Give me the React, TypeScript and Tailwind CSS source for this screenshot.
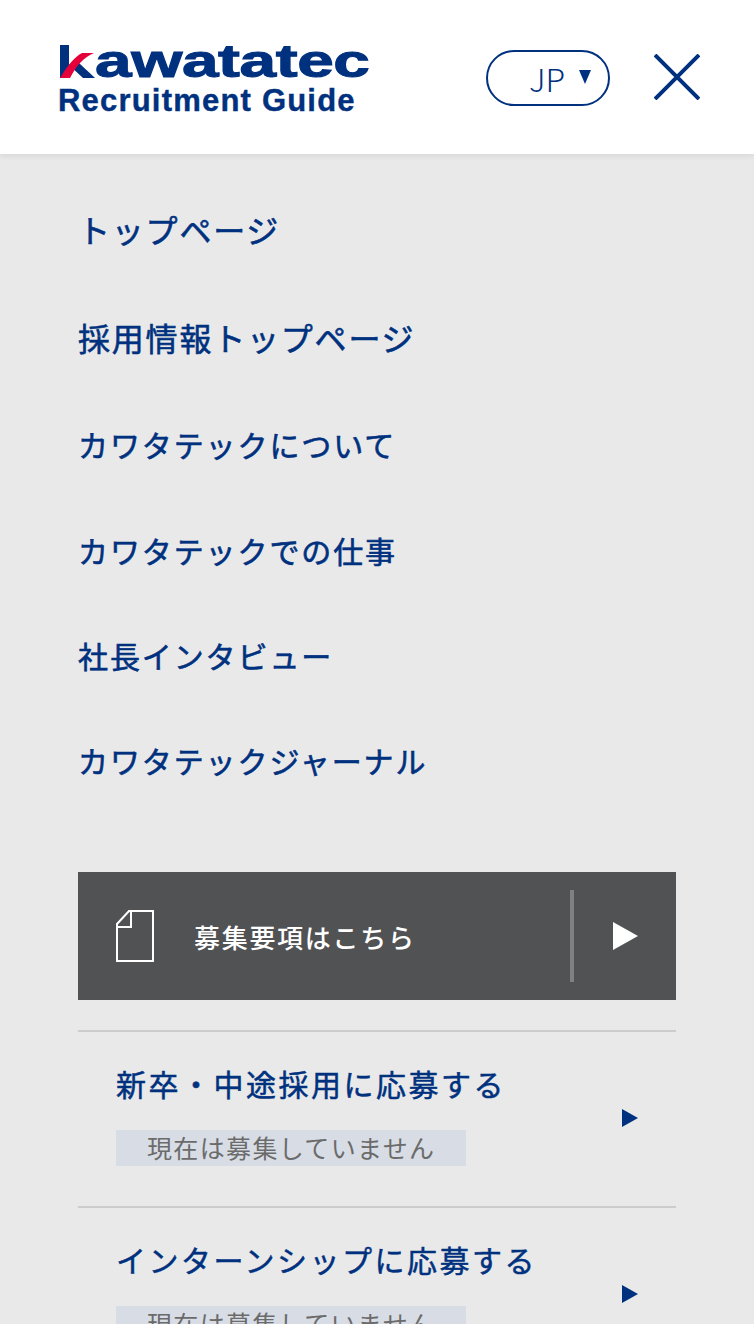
import React from 'react';

const NAVY = 'text-[#00317f]';
const jp = "font-['Noto_Sans_CJK_JP','Noto_Sans',sans-serif]";

const navItems = [
  { label: 'トップページ', height: 'h-[108px]', size: 'text-[32px] tracking-[1.8px]' },
  { label: '採用情報トップページ', height: 'h-[107px]', size: 'text-[32px] tracking-[1.8px]' },
  { label: 'カワタテックについて', height: 'h-[106px]', size: 'text-[30px] tracking-[1.9px]' },
  { label: 'カワタテックでの仕事', height: 'h-[105px]', size: 'text-[30px] tracking-[1.9px]' },
  { label: '社長インタビュー', height: 'h-[105px]', size: 'text-[30px] tracking-[1.9px]' },
  { label: 'カワタテックジャーナル', height: 'h-[105px]', size: 'text-[30px] tracking-[1.9px]' },
];

function Logo() {
  return (
    <div className="flex w-[312px] flex-col">
      <div className="flex h-[36px] items-end">
        <svg width="37" height="34" viewBox="0 0 37 34" className="shrink-0">
          <path d="M1 0H10V33H1Z" fill="#00317f" />
          <path d="M10 20L24 33H36L20 18L14 17Z" fill="#00317f" />
          <path d="M1 33C7 23 15 12 23 8H35C25 12 17 21 11 33Z" fill="#e60039" />
        </svg>
        <span className="-ml-[1px] origin-bottom-left scale-x-[1.43] font-['Liberation_Sans',sans-serif] text-[46px] leading-[35px] font-bold tracking-[-0.3px] whitespace-nowrap text-[#00317f] [-webkit-text-stroke:1px_#00317f]">
          awatatec
        </span>
      </div>
      <span className="mt-[5px] -ml-[1px] font-['Liberation_Sans',sans-serif] text-[31px] leading-[34px] font-bold tracking-[1.2px] whitespace-nowrap text-[#00317f] [-webkit-text-stroke:0.4px_#00317f]">
        Recruitment Guide
      </span>
    </div>
  );
}

function ApplyRow({ title }: { title: string }) {
  return (
    <div className="relative h-[176px] border-t-2 border-[#cccccc] pt-[30px] pl-[38px]">
      <div className={`text-[30px] leading-[42px] tracking-[2.5px] whitespace-nowrap [-webkit-text-stroke:0.5px_#00317f] ${NAVY}`}>{title}</div>
      <div className="mt-[26px] flex h-[36px] w-[350px] items-center bg-[#d8dde5] pl-[31px] text-[25px] tracking-[1.35px] whitespace-nowrap text-[#6b6b6b]">
        現在は募集していません
      </div>
      <svg width="16" height="18" viewBox="0 0 16 18" className="absolute top-[77px] right-[38px]">
        <path d="M0 0L16 9L0 18Z" fill="#00317f" />
      </svg>
    </div>
  );
}

export default function App() {
  return (
    <div className={`h-[1324px] w-[754px] overflow-hidden bg-[#e9e9e9] ${jp}`}>
      <header className="flex h-[154px] items-start justify-between bg-white pt-[43px] pr-[54px] pl-[59px] shadow-[0_2px_6px_rgba(0,0,0,0.08)]">
        <Logo />
        <div className="flex items-center">
          <div className="mt-[7px] flex h-[56px] w-[124px] items-center rounded-full border-2 border-[#00317f] pl-[41px]">
            <span className={`text-[32px] leading-none font-light ${NAVY}`}>JP</span>
            <svg width="12" height="14" viewBox="0 0 12 14" className="ml-[14px] -translate-y-[1px]">
              <path d="M0 0H12L6 14Z" fill="#00317f" />
            </svg>
          </div>
          <svg width="46" height="46" viewBox="0 0 46 46" className="mt-[5px] ml-[44px]">
            <path d="M1 1L45 45M45 1L1 45" stroke="#00317f" strokeWidth="4" fill="none" />
          </svg>
        </div>
      </header>

      <main className="px-[78px] pt-[21px]">
        <nav>
          {navItems.map((item) => (
            <a
              key={item.label}
              className={`flex items-start leading-[108px] font-normal whitespace-nowrap [-webkit-text-stroke:0.6px_#00317f] ${item.size} ${item.height} ${NAVY}`}
            >
              {item.label}
            </a>
          ))}
        </nav>

        <div className="mt-[61px] flex h-[128px] items-center bg-[#515254]">
          <svg width="38" height="52" viewBox="0 0 38 52" className="ml-[38px] shrink-0">
            <path
              d="M1 51V14L13 1H37V51ZM1 17H15V1"
              stroke="#ffffff"
              strokeWidth="2"
              fill="none"
            />
          </svg>
          <span className="ml-[40px] text-[26px] font-medium tracking-[1.7px] text-white">募集要項はこちら</span>
          <div className="mr-[38px] ml-auto flex items-center">
            <div className="h-[92px] w-[4px] bg-[#808080]" />
            <svg width="25" height="28" viewBox="0 0 25 28" className="ml-[39px]">
              <path d="M0 0L25 14L0 28Z" fill="#ffffff" />
            </svg>
          </div>
        </div>

        <div className="mt-[30px]">
          <ApplyRow title="新卒・中途採用に応募する" />
          <ApplyRow title="インターンシップに応募する" />
        </div>
      </main>
    </div>
  );
}
